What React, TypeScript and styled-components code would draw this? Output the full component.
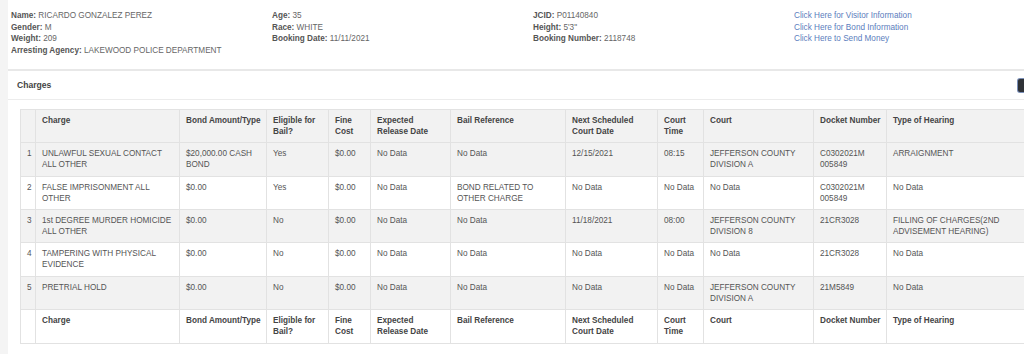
import React from "react";
import styled, { createGlobalStyle } from "styled-components";

const GlobalStyle = createGlobalStyle`
  html, body {
    margin: 0;
    padding: 0;
    background: #fff;
    overflow: hidden;
  }
  body {
    font-family: "Liberation Sans", Arial, sans-serif;
    font-size: 8.2px;
    color: #555;
  }
`;

const StyledPage = styled.div`
  display: flex;
  min-height: 100vh;
  width: 1044px;
`;

const StyledStrip = styled.div`
  width: 8px;
  flex-shrink: 0;
  background-color: #f4f4f4;
`;

const StyledMain = styled.div`
  width: 1036px;
  flex-shrink: 0;
`;

const StyledInfo = styled.div`
  display: grid;
  grid-template-columns: repeat(4, 261px);
  padding: 10px 0 12px 3px;
  line-height: 11.7px;
  border-bottom: 2px solid #e8e8e8;
`;

const StyledInfoCol = styled.div`
  display: flex;
  flex-direction: column;
`;

const StyledInfoLine = styled.div`
  color: #666;
  white-space: nowrap;
`;

const StyledLabel = styled.b`
  color: #555;
  font-weight: 700;
`;

const StyledLink = styled.a`
  color: #5b7dbd;
  text-decoration: none;
  white-space: nowrap;
`;

const StyledPanelHeading = styled.div`
  display: flex;
  align-items: center;
  justify-content: space-between;
  height: 28px;
  padding: 0 10px 0 9px;
  border-bottom: 1px solid #ececec;
`;

const StyledPanelTitle = styled.div`
  font-weight: 700;
  font-size: 8.6px;
  color: #444;
  margin-top: 1px;
`;

const StyledDarkButton = styled.div`
  width: 16px;
  height: 13px;
  margin-top: 1px;
  border-radius: 2px;
  background-color: #2f3237;
  box-shadow: 0 0 0 1px #7a8fb8;
`;

const StyledPanelBody = styled.div`
  padding: 9px 0 0 12px;
`;

const StyledTable = styled.table`
  border-collapse: collapse;
  table-layout: fixed;
  width: 1020px;
  border: 1px solid #e2e2e2;
  line-height: 11.1px;
`;

const StyledRow = styled.tr<{ $shaded?: boolean }>`
  background-color: ${(p) => (p.$shaded ? "#f2f2f2" : "#fff")};
  border-top: 1px solid #e2e2e2;
`;

const StyledTh = styled.th`
  text-align: left;
  vertical-align: top;
  font-weight: 700;
  color: #444;
  white-space: nowrap;
  padding: 5px 1px 5px 6px;
  height: 22.4px;
  border-left: 1px solid #e2e2e2;
  box-sizing: content-box;
`;

const StyledTd = styled.td<{ $num?: boolean }>`
  text-align: left;
  vertical-align: top;
  color: #555;
  padding: 5px ${(p) => (p.$num ? "2px" : "4px")} 5px 6px;
  height: 22.4px;
  border-left: 1px solid #e2e2e2;
  box-sizing: content-box;
`;

const colWidths = [15, 144, 87, 62, 42, 80, 115, 92, 46, 110, 73, 154];

const headers: string[][] = [
  [],
  ["Charge"],
  ["Bond Amount/Type"],
  ["Eligible for", "Bail?"],
  ["Fine", "Cost"],
  ["Expected", "Release Date"],
  ["Bail Reference"],
  ["Next Scheduled", "Court Date"],
  ["Court", "Time"],
  ["Court"],
  ["Docket Number"],
  ["Type of Hearing"],
];

const charges = [
  [
    "1",
    "UNLAWFUL SEXUAL CONTACT ALL OTHER",
    "$20,000.00 CASH BOND",
    "Yes",
    "$0.00",
    "No Data",
    "No Data",
    "12/15/2021",
    "08:15",
    "JEFFERSON COUNTY DIVISION A",
    "C0302021M 005849",
    "ARRAIGNMENT",
  ],
  [
    "2",
    "FALSE IMPRISONMENT ALL OTHER",
    "$0.00",
    "Yes",
    "$0.00",
    "No Data",
    "BOND RELATED TO OTHER CHARGE",
    "No Data",
    "No Data",
    "No Data",
    "C0302021M 005849",
    "No Data",
  ],
  [
    "3",
    "1st DEGREE MURDER HOMICIDE ALL OTHER",
    "$0.00",
    "No",
    "$0.00",
    "No Data",
    "No Data",
    "11/18/2021",
    "08:00",
    "JEFFERSON COUNTY DIVISION 8",
    "21CR3028",
    "FILLING OF CHARGES(2ND ADVISEMENT HEARING)",
  ],
  [
    "4",
    "TAMPERING WITH PHYSICAL EVIDENCE",
    "$0.00",
    "No",
    "$0.00",
    "No Data",
    "No Data",
    "No Data",
    "No Data",
    "No Data",
    "21CR3028",
    "No Data",
  ],
  [
    "5",
    "PRETRIAL HOLD",
    "$0.00",
    "No",
    "$0.00",
    "No Data",
    "No Data",
    "No Data",
    "No Data",
    "JEFFERSON COUNTY DIVISION A",
    "21M5849",
    "No Data",
  ],
];

const InfoLine = ({ label, value }: { label: string; value: string }) => (
  <StyledInfoLine>
    <StyledLabel>{label}:</StyledLabel> {value}
  </StyledInfoLine>
);

const HeaderRow = ({ shaded }: { shaded?: boolean }) => (
  <StyledRow $shaded={shaded}>
    {headers.map((lines, i) => (
      <StyledTh key={i}>
        {lines.map((l, j) => (
          <React.Fragment key={j}>
            {j > 0 && <br />}
            {l}
          </React.Fragment>
        ))}
      </StyledTh>
    ))}
  </StyledRow>
);

export default function App() {
  return (
    <>
      <GlobalStyle />
      <StyledPage>
        <StyledStrip />
        <StyledMain>
          <StyledInfo>
            <StyledInfoCol>
              <InfoLine label="Name" value="RICARDO GONZALEZ PEREZ" />
              <InfoLine label="Gender" value="M" />
              <InfoLine label="Weight" value="209" />
              <InfoLine label="Arresting Agency" value="LAKEWOOD POLICE DEPARTMENT" />
            </StyledInfoCol>
            <StyledInfoCol>
              <InfoLine label="Age" value="35" />
              <InfoLine label="Race" value="WHITE" />
              <InfoLine label="Booking Date" value="11/11/2021" />
            </StyledInfoCol>
            <StyledInfoCol>
              <InfoLine label="JCID" value="P01140840" />
              <InfoLine label="Height" value={"5'3\""} />
              <InfoLine label="Booking Number" value="2118748" />
            </StyledInfoCol>
            <StyledInfoCol>
              <StyledLink href="#">Click Here for Visitor Information</StyledLink>
              <StyledLink href="#">Click Here for Bond Information</StyledLink>
              <StyledLink href="#">Click Here to Send Money</StyledLink>
            </StyledInfoCol>
          </StyledInfo>
          <StyledPanelHeading>
            <StyledPanelTitle>Charges</StyledPanelTitle>
            <StyledDarkButton />
          </StyledPanelHeading>
          <StyledPanelBody>
            <StyledTable>
              <colgroup>
                {colWidths.map((w, i) => (
                  <col key={i} style={{ width: w }} />
                ))}
              </colgroup>
              <thead>
                <HeaderRow shaded />
              </thead>
              <tbody>
                {charges.map((row, r) => (
                  <StyledRow key={r} $shaded={r % 2 === 0}>
                    {row.map((cell, c) => (
                      <StyledTd key={c} $num={c === 0}>
                        {cell}
                      </StyledTd>
                    ))}
                  </StyledRow>
                ))}
              </tbody>
              <tfoot>
                <HeaderRow />
              </tfoot>
            </StyledTable>
          </StyledPanelBody>
        </StyledMain>
      </StyledPage>
    </>
  );
}
